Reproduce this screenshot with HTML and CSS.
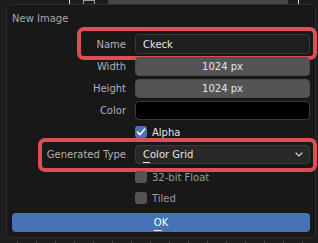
FILE: index.html
```html
<!DOCTYPE html>
<html lang="en">
<head>
    <meta charset="UTF-8">
    <meta name="viewport" content="width=device-width, initial-scale=1.0">
    <title>New Image</title>
    <link rel="stylesheet" href="styles.css">
</head>
<body>
    <div class="editor">
        <div class="header-strip">
            <span class="tick tick-a"></span>
            <span class="mini-box"></span>
            <span class="bar"></span>
            <span class="tick tick-b"></span>
        </div>

        <div class="dialog">
            <div class="title">New Image</div>

            <div class="props">
                <div class="row row-name">
                    <label>Name</label>
                    <div class="field text">Ckeck</div>
                    <span class="mark mark-name"></span>
                </div>
                <div class="row">
                    <label>Width</label>
                    <div class="field number">1024 px</div>
                </div>
                <div class="row">
                    <label>Height</label>
                    <div class="field number">1024 px</div>
                </div>
                <div class="row">
                    <label>Color</label>
                    <div class="field swatch"></div>
                </div>
                <div class="row">
                    <span></span>
                    <div class="check on">
                        <span class="box">
                            <svg width="12" height="12" viewBox="0 0 12 12"><path d="M2.5 6.2 L5 8.6 L9.6 3.2" fill="none" stroke="#fff" stroke-width="1.6" stroke-linecap="round" stroke-linejoin="round"/></svg>
                        </span>
                        Alpha
                    </div>
                </div>
                <div class="row row-type">
                    <label>Generated Type</label>
                    <div class="field select">
                        <span><u>C</u>olor Grid</span>
                        <svg width="8" height="5" viewBox="0 0 8 5"><path d="M1 1 L4 4 L7 1" fill="none" stroke="#cfcfcf" stroke-width="1.2" stroke-linecap="round"/></svg>
                    </div>
                    <span class="mark mark-type"></span>
                </div>
                <div class="row row-float">
                    <span></span>
                    <div class="check off"><span class="box"></span>32-bit Float</div>
                </div>
                <div class="row row-tiled">
                    <span></span>
                    <div class="check off"><span class="box"></span>Tiled</div>
                </div>
            </div>

            <button class="ok"><u>O</u>K</button>
        </div>

        <div class="timeline"></div>
    </div>
</body>
</html>
```

FILE: styles.css
```css
body { margin: 0; background: #1d1d1d; font-family: 'DejaVu Sans', sans-serif; font-size: 10px; overflow: hidden; }
.editor { width: 318px; height: 243px; }

/* bits of the editor behind the popup */
.header-strip { height: 4px; display: flex; align-items: stretch; }
.tick { width: 1px; background: #d8d8d8; }
.tick-a { margin-left: 69px; }
.mini-box { width: 10px; margin-left: 13px; border: 1px solid #9a9a9a; border-bottom: none; }
.bar { width: 180px; margin-left: 13px; background: #474747; }
.tick-b { margin-left: 10px; }

.dialog { box-sizing: border-box; width: 310px; height: 234px; margin-left: 6px; padding: 0 5px; background: #181818; border: 1px solid #2c2c2c; border-radius: 6px; }
.title { margin-top: 8px; line-height: 12px; color: #a8a8a8; }

.props { display: flex; flex-direction: column; gap: 2px; margin-top: 9px; }
.row { position: relative; display: grid; grid-template-columns: 114px 175px; column-gap: 9px; align-items: center; height: 20px; }
.row label { text-align: right; color: #b2b2b2; }
.row-float { margin-top: 1px; }
.row-tiled { margin-top: -1px; }

.field { box-sizing: border-box; height: 19px; border-radius: 4px; display: flex; align-items: center; color: #e4e4e4; }
.field.text { background: #1e1e1e; border: 1px solid #3a3a3a; padding-left: 7px; height: 20px; }
.field.number { background: #545454; border: 1px solid #4c4c4c; justify-content: center; }
.field.swatch { background: #000; border: 1px solid #3c3c3c; }
.field.select { background: #282828; border: 1px solid #3c3c3c; padding: 0 6px 0 7px; justify-content: space-between; }
.field u, .ok u { text-underline-offset: 4px; text-decoration-thickness: 1px; }

.check { display: flex; align-items: center; gap: 5px; }
.check .box { width: 12px; height: 12px; border-radius: 3px; display: block; }
.check .box svg { display: block; }
.check.on { color: #e6e6e6; }
.check.on .box { background: #4772b3; }
.check.off { color: #9c9c9c; }
.check.off .box { background: #545454; }

/* red callouts drawn over the screenshot */
.mark { position: absolute; border: 4px solid #df4d55; border-radius: 7px; pointer-events: none; }
.mark-name { top: -7px; bottom: -6px; left: 65px; right: -7px; }
.mark-type { top: -6px; bottom: -8px; left: 26px; right: -7px; }

.ok { display: block; width: 298px; height: 19px; margin-top: 5px; padding: 0; border: none; border-radius: 4px; background: #4772b3; color: #fff; font: inherit; }

.timeline { height: 5px; background-image: radial-gradient(circle, #4a4a4a 0.8px, transparent 1px); background-size: 19px 2px; background-position: 8px 3px; background-repeat: repeat-x; }
```
